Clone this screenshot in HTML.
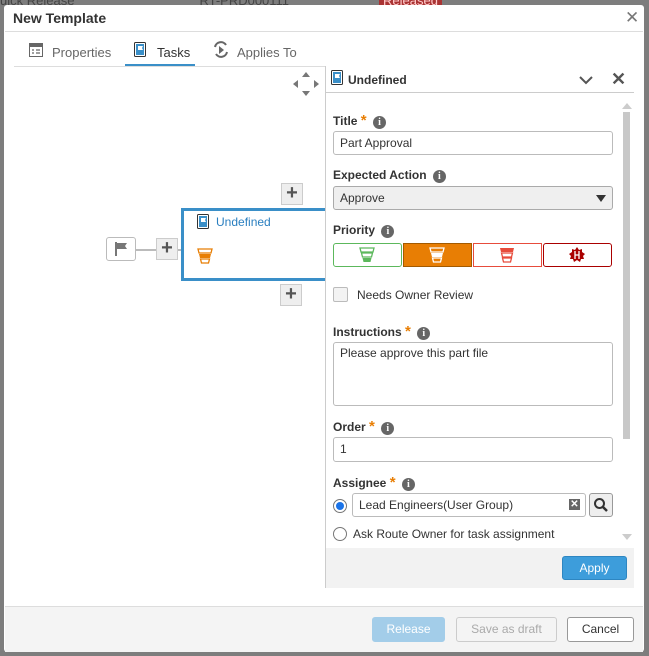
<!DOCTYPE html><html><head><style>
*{box-sizing:border-box;margin:0;padding:0}
html,body{width:649px;height:656px;overflow:hidden}
body{background:#7d7d7d;font-family:"Liberation Sans",sans-serif;font-size:12px;color:#333;position:relative}
.a{position:absolute}
.dlg{left:4px;top:5px;width:640px;height:647px;background:#fff;border-radius:3px}
.lbl{font-weight:bold;font-size:12px;color:#333}
.star{color:#e87e04;font-size:15px;font-weight:bold}
.info{display:inline-block;width:13px;height:13px;border-radius:50%;background:#666;color:#fff;font-size:10px;text-align:center;line-height:13px;font-weight:bold;font-family:"Liberation Serif",serif;margin-left:3px}
.inp{border:1px solid #bbb;border-radius:3px;background:#fff;padding-left:6px;font-size:12px;line-height:22px}
.btn{border:1px solid #aaa;border-radius:3px;text-align:center;font-size:12px;line-height:22px}
.plus{width:22px;height:22px;background:#eee;border:1px solid #ccc;text-align:center;font-size:20px;line-height:19px;font-weight:bold;color:#555}
</style></head><body>
<div class="a" style="top:-7px;left:0;width:649px;height:12px;overflow:hidden;color:#444;font-size:13px;white-space:nowrap">uick Release<span style="margin-left:125px">RT-PRD000111</span><span style="margin-left:90px;background:#a33;color:#fcc;padding:0 4px">Released</span></div>
<div class="a dlg"></div>
<div class="a" style="left:13px;top:10px;font-size:14px;font-weight:bold;color:#333">New Template</div>
<div class="a" style="left:625px;top:8px;font-size:17px;color:#777">✕</div>
<div class="a" style="left:5px;top:31px;width:638px;height:1px;background:#ddd"></div>
<svg class="a" style="left:29px;top:43px" width="14" height="14"><rect x="0.5" y="0.5" width="13" height="13" fill="none" stroke="#666"/><rect x="1" y="1" width="12" height="3" fill="#666"/><path d="M3 7h2M7 7h4M3 10h2M7 10h4" stroke="#666" stroke-width="1.3"/></svg>
<div class="a" style="left:52px;top:45px;color:#666;font-size:13px">Properties</div>
<svg class="a" style="left:134px;top:41px" width="12" height="16"><rect x="0.5" y="1.5" width="11" height="14" rx="1" fill="#fff" stroke="#333"/><rect x="2" y="3" width="8" height="11" fill="#3a8fc8"/><path d="M4 5v7M4 5h5l-1 2 1 2H4" fill="#fff"/></svg>
<div class="a" style="left:157px;top:45px;color:#333;font-size:13px">Tasks</div>
<div class="a" style="left:125px;top:64px;width:70px;height:3px;background:#3a8fc8"></div>
<svg class="a" style="left:212px;top:41px" width="18" height="17"><path d="M3 6a6 6 0 0 1 11-2M15 11a6 6 0 0 1-11 2" fill="none" stroke="#666" stroke-width="2"/><path d="M7 5l5 4-5 4z" fill="#666"/></svg>
<div class="a" style="left:237px;top:45px;color:#666;font-size:13px">Applies To</div>
<div class="a" style="left:14px;top:66px;width:312px;height:1px;background:#ddd"></div>
<svg class="a" style="left:293px;top:72px" width="26" height="24"><path d="M13 0l4 5h-8zM13 24l4-5h-8zM0 12l5-4v8zM26 12l-5-4v8z" fill="#777"/></svg>
<div class="a plus" style="left:281px;top:183px">+</div>
<div class="a plus" style="left:280px;top:284px">+</div>
<div class="a" style="left:106px;top:237px;width:30px;height:24px;border:1px solid #bbb;border-radius:3px;background:#fff"></div>
<svg class="a" style="left:114px;top:241px" width="16" height="16"><path d="M2 1v14" stroke="#777" stroke-width="2"/><path d="M3 2h10l-2 3 2 3H3z" fill="#777"/></svg>
<div class="a" style="left:136px;top:249px;width:22px;height:2px;background:#bbb"></div>
<div class="a plus" style="left:156px;top:238px">+</div>
<div class="a" style="left:178px;top:249px;width:5px;height:2px;background:#bbb"></div>
<div class="a" style="left:181px;top:208px;width:145px;height:73px;border:3px solid #3a8fc8;border-right:none"></div>
<svg class="a" style="left:197px;top:213px" width="12" height="16"><rect x="0.5" y="1.5" width="11" height="14" rx="1" fill="#fff" stroke="#333"/><rect x="2" y="3" width="8" height="11" fill="#3a8fc8"/><path d="M4 5v7M4 5h5l-1 2 1 2H4" fill="#fff"/></svg>
<div class="a" style="left:216px;top:215px;color:#2a7fc0;font-size:12px">Undefined</div>
<svg class="a" style="left:197px;top:248px" width="16" height="16"><path d="M1 1h14l-1 4H2z" fill="none" stroke="#e87e04" stroke-width="1.3"/><path d="M2 6h12l-1 4H3z" fill="#e87e04"/><path d="M3.5 11h9l-1 4h-7z" fill="none" stroke="#e87e04" stroke-width="1.3"/></svg>
<div class="a" style="left:325px;top:66px;width:1px;height:522px;background:#ccc"></div>
<svg class="a" style="left:331px;top:69px" width="12" height="16"><rect x="0.5" y="1.5" width="11" height="14" rx="1" fill="#fff" stroke="#333"/><rect x="2" y="3" width="8" height="11" fill="#3a8fc8"/><path d="M4 5v7M4 5h5l-1 2 1 2H4" fill="#fff"/></svg>
<div class="a" style="left:348px;top:73px;font-weight:bold;font-size:12px">Undefined</div>
<svg class="a" style="left:579px;top:76px" width="14" height="9"><path d="M1 1l6 6 6-6" fill="none" stroke="#555" stroke-width="2"/></svg>
<div class="a" style="left:611px;top:69px;font-size:18px;color:#555;font-weight:bold">✕</div>
<div class="a" style="left:326px;top:92px;width:308px;height:1px;background:#ccc"></div>
<div class="a" style="left:622px;top:98px;width:0;height:0;border:5px solid transparent;border-bottom:6px solid #ccc"></div>
<div class="a" style="left:623px;top:112px;width:7px;height:327px;background:#c8c8c8"></div>
<div class="a" style="left:622px;top:534px;border:5px solid transparent;border-top:6px solid #ccc"></div>
<div class="a lbl" style="left:333px;top:112px">Title <span class="star">*</span> <span class="info">i</span></div>
<div class="a inp" style="left:333px;top:131px;width:280px;height:24px">Part Approval</div>
<div class="a lbl" style="left:333px;top:168px">Expected Action <span class="info">i</span></div>
<div class="a inp" style="left:333px;top:186px;width:280px;height:24px;background:#efefef;border-color:#aaa">Approve</div>
<div class="a" style="left:596px;top:195px;border:5px solid transparent;border-top:7px solid #333;border-bottom:none"></div>
<div class="a lbl" style="left:333px;top:223px">Priority <span class="info">i</span></div>
<div class="a" style="left:333px;top:243px;width:69px;height:24px;border:1px solid #5cb85c;border-radius:3px"></div>
<svg class="a" style="left:359px;top:247px" width="16" height="16"><path d="M1 1h14l-1 4H2z" fill="none" stroke="#5cb85c" stroke-width="1.3"/><path d="M2.5 6h11l-1 4h-9z" fill="none" stroke="#5cb85c" stroke-width="1.3"/><path d="M3.5 11h9l-1 4h-7z" fill="#5cb85c"/></svg>
<div class="a" style="left:403px;top:243px;width:69px;height:24px;background:#e87e04;border:1px solid #a35a00"></div>
<svg class="a" style="left:429px;top:247px" width="16" height="16"><path d="M1 1h14l-1 4H2z" fill="none" stroke="#fff" stroke-width="1.3"/><path d="M2 6h12l-1 4H3z" fill="#fff"/><path d="M3.5 11h9l-1 4h-7z" fill="none" stroke="#fff" stroke-width="1.3"/></svg>
<div class="a" style="left:473px;top:243px;width:69px;height:24px;border:1px solid #e74c3c"></div>
<svg class="a" style="left:499px;top:247px" width="16" height="16"><path d="M1 1h14l-1 4H2z" fill="#e74c3c"/><path d="M2.5 6h11l-1 4h-9z" fill="none" stroke="#e74c3c" stroke-width="1.3"/><path d="M3.5 11h9l-1 4h-7z" fill="none" stroke="#e74c3c" stroke-width="1.3"/></svg>
<div class="a" style="left:543px;top:243px;width:69px;height:24px;border:1px solid #a00;border-radius:3px"></div>
<svg class="a" style="left:569px;top:247px" width="16" height="16"><path d="M8 0l2 3 3-1 0 3 3 2-2 2 1 3-3 0-1 3-3-2-3 2-1-3-3 0 1-3-2-2 3-2 0-3 3 1z" fill="#a00"/><path d="M6 4v8M10 4v8M6 8h4" stroke="#fff" stroke-width="1.3"/></svg>
<div class="a" style="left:333px;top:287px;width:15px;height:15px;border:1px solid #bbb;border-radius:2px;background:#f3f3f3"></div>
<div class="a" style="left:357px;top:288px;font-size:12px">Needs Owner Review</div>
<div class="a lbl" style="left:333px;top:323px">Instructions <span class="star">*</span> <span class="info">i</span></div>
<div class="a inp" style="left:333px;top:342px;width:280px;height:64px;line-height:20px">Please approve this part file</div>
<div class="a lbl" style="left:333px;top:418px">Order <span class="star">*</span> <span class="info">i</span></div>
<div class="a inp" style="left:333px;top:437px;width:280px;height:25px">1</div>
<div class="a lbl" style="left:333px;top:474px">Assignee <span class="star">*</span> <span class="info">i</span></div>
<div class="a" style="left:333px;top:499px;width:14px;height:14px;border-radius:50%;border:1px solid #777;background:#fff"></div>
<div class="a" style="left:336px;top:502px;width:8px;height:8px;border-radius:50%;background:#1a73e8"></div>
<div class="a inp" style="left:352px;top:493px;width:234px;height:24px">Lead Engineers(User Group)</div>
<div class="a" style="left:569px;top:499px;width:11px;height:11px;background:#666;color:#fff;font-size:10px;line-height:11px;text-align:center;font-weight:bold">✕</div>
<div class="a" style="left:589px;top:493px;width:24px;height:24px;border:1px solid #999;border-radius:3px;background:#eee"></div>
<svg class="a" style="left:593px;top:497px" width="16" height="16"><circle cx="6.5" cy="6.5" r="4.5" fill="none" stroke="#333" stroke-width="2"/><path d="M10 10l4 4" stroke="#333" stroke-width="2.5"/></svg>
<div class="a" style="left:333px;top:527px;width:14px;height:14px;border-radius:50%;border:1px solid #777"></div>
<div class="a" style="left:353px;top:527px;font-size:12px">Ask Route Owner for task assignment</div>
<div class="a" style="left:326px;top:548px;width:308px;height:40px;background:#f2f2f2"></div>
<div class="a btn" style="left:562px;top:556px;width:65px;height:24px;background:#3d9ddb;border-color:#2e86c1;color:#fff">Apply</div>
<div class="a" style="left:5px;top:606px;width:638px;height:46px;background:#f4f4f4;border-top:1px solid #ddd"></div>
<div class="a btn" style="left:372px;top:617px;width:73px;height:25px;background:#a3cde9;border-color:#a3cde9;color:#fff">Release</div>
<div class="a btn" style="left:456px;top:617px;width:101px;height:25px;border-color:#ccc;color:#aaa;background:#f4f4f4">Save as draft</div>
<div class="a btn" style="left:567px;top:617px;width:67px;height:25px;color:#333;background:#fff;border-color:#999">Cancel</div>
</body></html>
